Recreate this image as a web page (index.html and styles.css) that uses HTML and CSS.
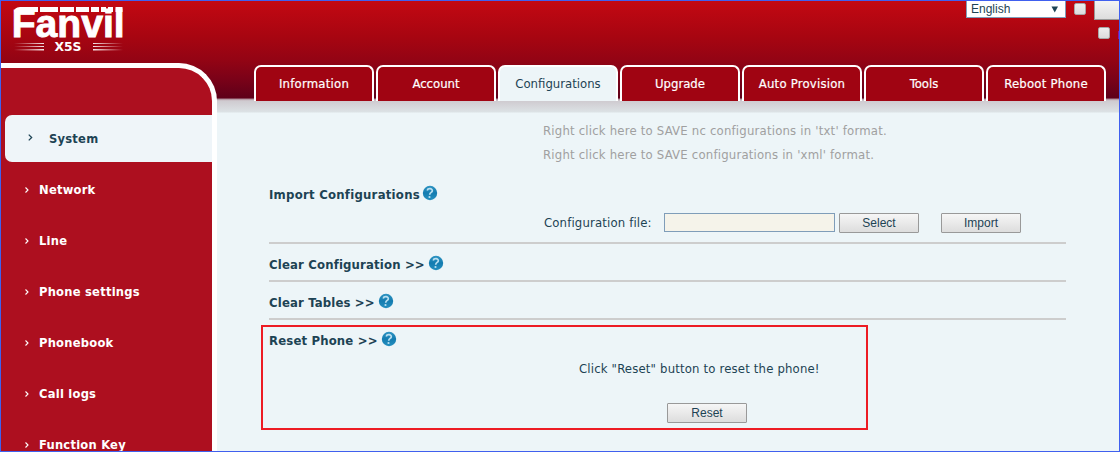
FILE: index.html
```html
<!DOCTYPE html>
<html lang="en">
<head>
<meta charset="utf-8">
<title>Fanvil X5S</title>
<link rel="stylesheet" href="styles.css">
</head>
<body>
<svg width="0" height="0" class="defs">
  <defs>
    <linearGradient id="ball" x1="0" y1="0" x2="0" y2="1"><stop offset="0" stop-color="#2f94c2"/><stop offset=".5" stop-color="#147cb0"/><stop offset="1" stop-color="#2690c0"/></linearGradient>
    <symbol id="help" viewBox="0 0 16 16">
      <circle cx="8" cy="8" r="7.2" fill="url(#ball)"/>
      <path d="M5.200 5.500C5.800 2.900 10.600 3.200 10.300 5.800C10.100 7.600 7.900 7.300 7.700 9.700" fill="none" stroke="#b9dff0" stroke-width="1.7"/>
      <circle cx="7.500" cy="12" r="1.1" fill="#b9dff0"/>
    </symbol>
    <symbol id="arrow" viewBox="0 0 4 6"><path d="M.5.5L3 3L.5 5.500" fill="none" stroke="currentColor" stroke-width="1.1"/></symbol>
  </defs>
</svg>
<div class="page">
  <div class="left">
    <div class="brand">
      <svg class="logo" width="140" height="60" viewBox="0 0 140 60">
        <defs>
          <linearGradient id="fl"><stop offset="0" stop-color="#fff" stop-opacity="0"/><stop offset="1" stop-color="#fff" stop-opacity=".9"/></linearGradient>
          <linearGradient id="fr"><stop offset="0" stop-color="#fff" stop-opacity=".9"/><stop offset="1" stop-color="#fff" stop-opacity="0"/></linearGradient>
        </defs>
        <text class="word" x="11.700" y="36.500" textLength="113" lengthAdjust="spacingAndGlyphs">Fanvil</text>
        <path d="M14 13Q14 7 20 7H38V12H14zM40 7H58V12H40zM60 7H74V12H60zM76 7H89V12H76zM91 7H99V12H91zM101 7H106V12H101zM108 7H113V12H108zM115.500 7H122.500V12H115.500z" fill="#fff"/>
        <path d="M14 43h30v1H14zM14 46h30v1H14zM14 49h30v1.500H14z" fill="url(#fl)"/>
        <path d="M93 43h30v1H93zM93 46h30v1H93zM93 49h30v1.500H93z" fill="url(#fr)"/>
        <text class="model" x="54.500" y="51" textLength="27" lengthAdjust="spacingAndGlyphs">X5S</text>
      </svg>
    </div>
    <nav class="side">
      <a class="item active"><svg width="5" height="7"><use href="#arrow"/></svg><span>System</span></a>
      <a class="item"><svg width="4" height="6"><use href="#arrow"/></svg><span>Network</span></a>
      <a class="item"><svg width="4" height="6"><use href="#arrow"/></svg><span>Line</span></a>
      <a class="item"><svg width="4" height="6"><use href="#arrow"/></svg><span>Phone settings</span></a>
      <a class="item"><svg width="4" height="6"><use href="#arrow"/></svg><span>Phonebook</span></a>
      <a class="item"><svg width="4" height="6"><use href="#arrow"/></svg><span>Call logs</span></a>
      <a class="item"><svg width="4" height="6"><use href="#arrow"/></svg><span>Function Key</span></a>
    </nav>
  </div>
  <div class="right">
    <div class="tools">
      <div class="lang"><span>English</span><svg width="8" height="7"><path d="M.5.5H7L3.750 6.500z" fill="#1d4354"/></svg></div>
      <i class="check"></i>
      <div class="end"><i class="blank"></i><div class="keep"><i class="check"></i><i class="mark"></i></div></div>
    </div>
    <div class="tabs">
      <a class="tab wide">Information</a>
      <a class="tab">Account</a>
      <a class="tab on">Configurations</a>
      <a class="tab">Upgrade</a>
      <a class="tab wide">Auto Provision</a>
      <a class="tab">Tools</a>
      <a class="tab wide">Reboot Phone</a>
    </div>
    <main class="content">
      <div class="saves">
        <p>Right click here to SAVE nc configurations in 'txt' format.</p>
        <p>Right click here to SAVE configurations in 'xml' format.</p>
      </div>
      <section class="import">
        <h2><span>Import Configurations</span><svg width="16" height="16"><use href="#help"/></svg></h2>
        <div class="file"><label>Configuration file:</label><i class="input"></i><span class="btn">Select</span><span class="btn far">Import</span></div>
      </section>
      <section class="row"><h2><span>Clear Configuration &gt;&gt;</span><svg width="16" height="16"><use href="#help"/></svg></h2></section>
      <section class="row"><h2><span>Clear Tables &gt;&gt;</span><svg width="16" height="16"><use href="#help"/></svg></h2></section>
      <section class="reset">
        <h2><span>Reset Phone &gt;&gt;</span><svg width="16" height="16"><use href="#help"/></svg></h2>
        <p>Click "Reset" button to reset the phone!</p>
        <span class="btn">Reset</span>
      </section>
    </main>
  </div>
  <div class="frame"></div>
</div>
</body>
</html>
```
FILE: styles.css
```css
* { box-sizing: border-box; }
body { margin: 0; overflow: hidden; font: 13px/18px "DejaVu Sans Condensed", "DejaVu Sans", sans-serif; font-stretch: condensed; color: #1d4354; }
p, h2 { margin: 0; }
.defs { display: block; height: 0; }
.page {
  position: relative; display: flex; width: 1120px; height: 452px; overflow: hidden;
  background: linear-gradient(#c40812 0, #a70511 37px, #930414 60px, #7c0218 78px, #5e0019 98px, #a98290 99px, #c6b8bf 100px, #cfcbd0 101px, #dce2e5 112px, #edf5f8 113px);
}
.frame { position: absolute; inset: 0; border: 1px solid #4060ee; }
.left { flex: 0 0 217px; }
.brand { height: 63px; }
.logo { display: block; }
.word { font: bold 39px "Liberation Sans", sans-serif; fill: #fff; stroke: #fff; stroke-width: .9px; }
.model { font: bold 12.5px "DejaVu Sans", sans-serif; fill: #fff; }
.side { height: 450px; border: 5px solid #fff; border-width: 5px 5px 0 0; border-radius: 0 38px 0 0; background: #ad0f1f; padding: 47px 0 0 5px; }
.item { display: flex; align-items: center; height: 51px; padding-left: 20px; gap: 10px; color: #fff; font-weight: bold; font-size: 12.8px; letter-spacing: .24px; }
.item svg { margin-top: 1px; }
.item.active { height: 47px; margin-bottom: 2px; padding-left: 23px; gap: 16px; background: #eff5f9; color: #1d4354; border-radius: 7px 0 0 7px; }
.item.active svg { margin-top: -2px; }
.right { flex: 1; min-width: 0; }
.tools { display: flex; height: 65px; padding-left: 749px; }
.lang { display: flex; justify-content: space-between; align-items: center; flex: 0 0 100px; height: 18px; padding: 0 6px 0 4px; background: #fff; border: 1px solid #7f9db9; font: 12px/16px "Liberation Sans", sans-serif; }
.check { display: block; flex: 0 0 12px; width: 12px; height: 12px; margin: 3px 0 0 8px; border: 1px solid #a8a8a8; border-radius: 2px; background: linear-gradient(#eee, #dcdcdc); }
.end { margin-left: 8px; width: 26px; }
.blank { display: block; height: 20px; width: 30px; background: linear-gradient(#f4f4f4, #ddd); border: 1px solid #999; }
.keep { display: flex; justify-content: space-between; padding-top: 7px; }
.keep .check { margin: 0 0 0 4px; }
.mark { width: 2px; height: 8px; margin-top: 4px; background: #8a16a8; }
.tabs { display: flex; gap: 2px; padding-left: 37px; height: 36px; }
.tab { flex: 0 0 120px; border: 2px solid #fff; border-bottom: 0; border-radius: 7px 7px 0 0; background: #a00412; color: #fff; text-align: center; line-height: 34px; -webkit-text-stroke: .2px #fff; }
.tab.wide { letter-spacing: .22px; }
.tab.on { background: #edf5f8; color: #1d4354; -webkit-text-stroke: 0; }
.content { height: 351px; margin-top: 12px; background: #edf5f8; padding: 6px 0 0 44px; }
.saves { padding-left: 282px; color: #a0a0a0; line-height: 24px; letter-spacing: .2px; }
h2 { display: flex; gap: 3px; height: 20px; font-size: 13px; line-height: 20px; letter-spacing: .16px; }
.import { width: 797px; height: 59px; margin: 18px 0 0 8px; border-bottom: 2px solid #cdcdcd; }
.import h2 { gap: 2px; letter-spacing: .25px; }
.file { display: flex; padding: 8px 0 0 275px; align-items: flex-start; }
.file label { width: 120px; padding-top: 1px; letter-spacing: .15px; }
.input { width: 171px; height: 19px; border: 1px solid #7f9db9; background: #f5f3ea; }
.btn { display: block; width: 80px; height: 20px; margin-left: 4px; border: 1px solid #999; border-radius: 1px; background: linear-gradient(#f6f6f6, #ddd); font: 12px/18px "Liberation Sans", sans-serif; text-align: center; letter-spacing: 0; }
.btn.far { margin-left: 22px; }
.row { width: 797px; height: 38px; margin-left: 8px; padding-top: 11px; border-bottom: 2px solid #cdcdcd; }
.reset { width: 607px; height: 105px; margin-top: 5px; padding: 4px 6px; border: 2px solid #ed1c24; }
.reset p { padding: 9px 0 0 310px; letter-spacing: .17px; }
.reset .btn { margin: 25px 0 0 398px; }
```
